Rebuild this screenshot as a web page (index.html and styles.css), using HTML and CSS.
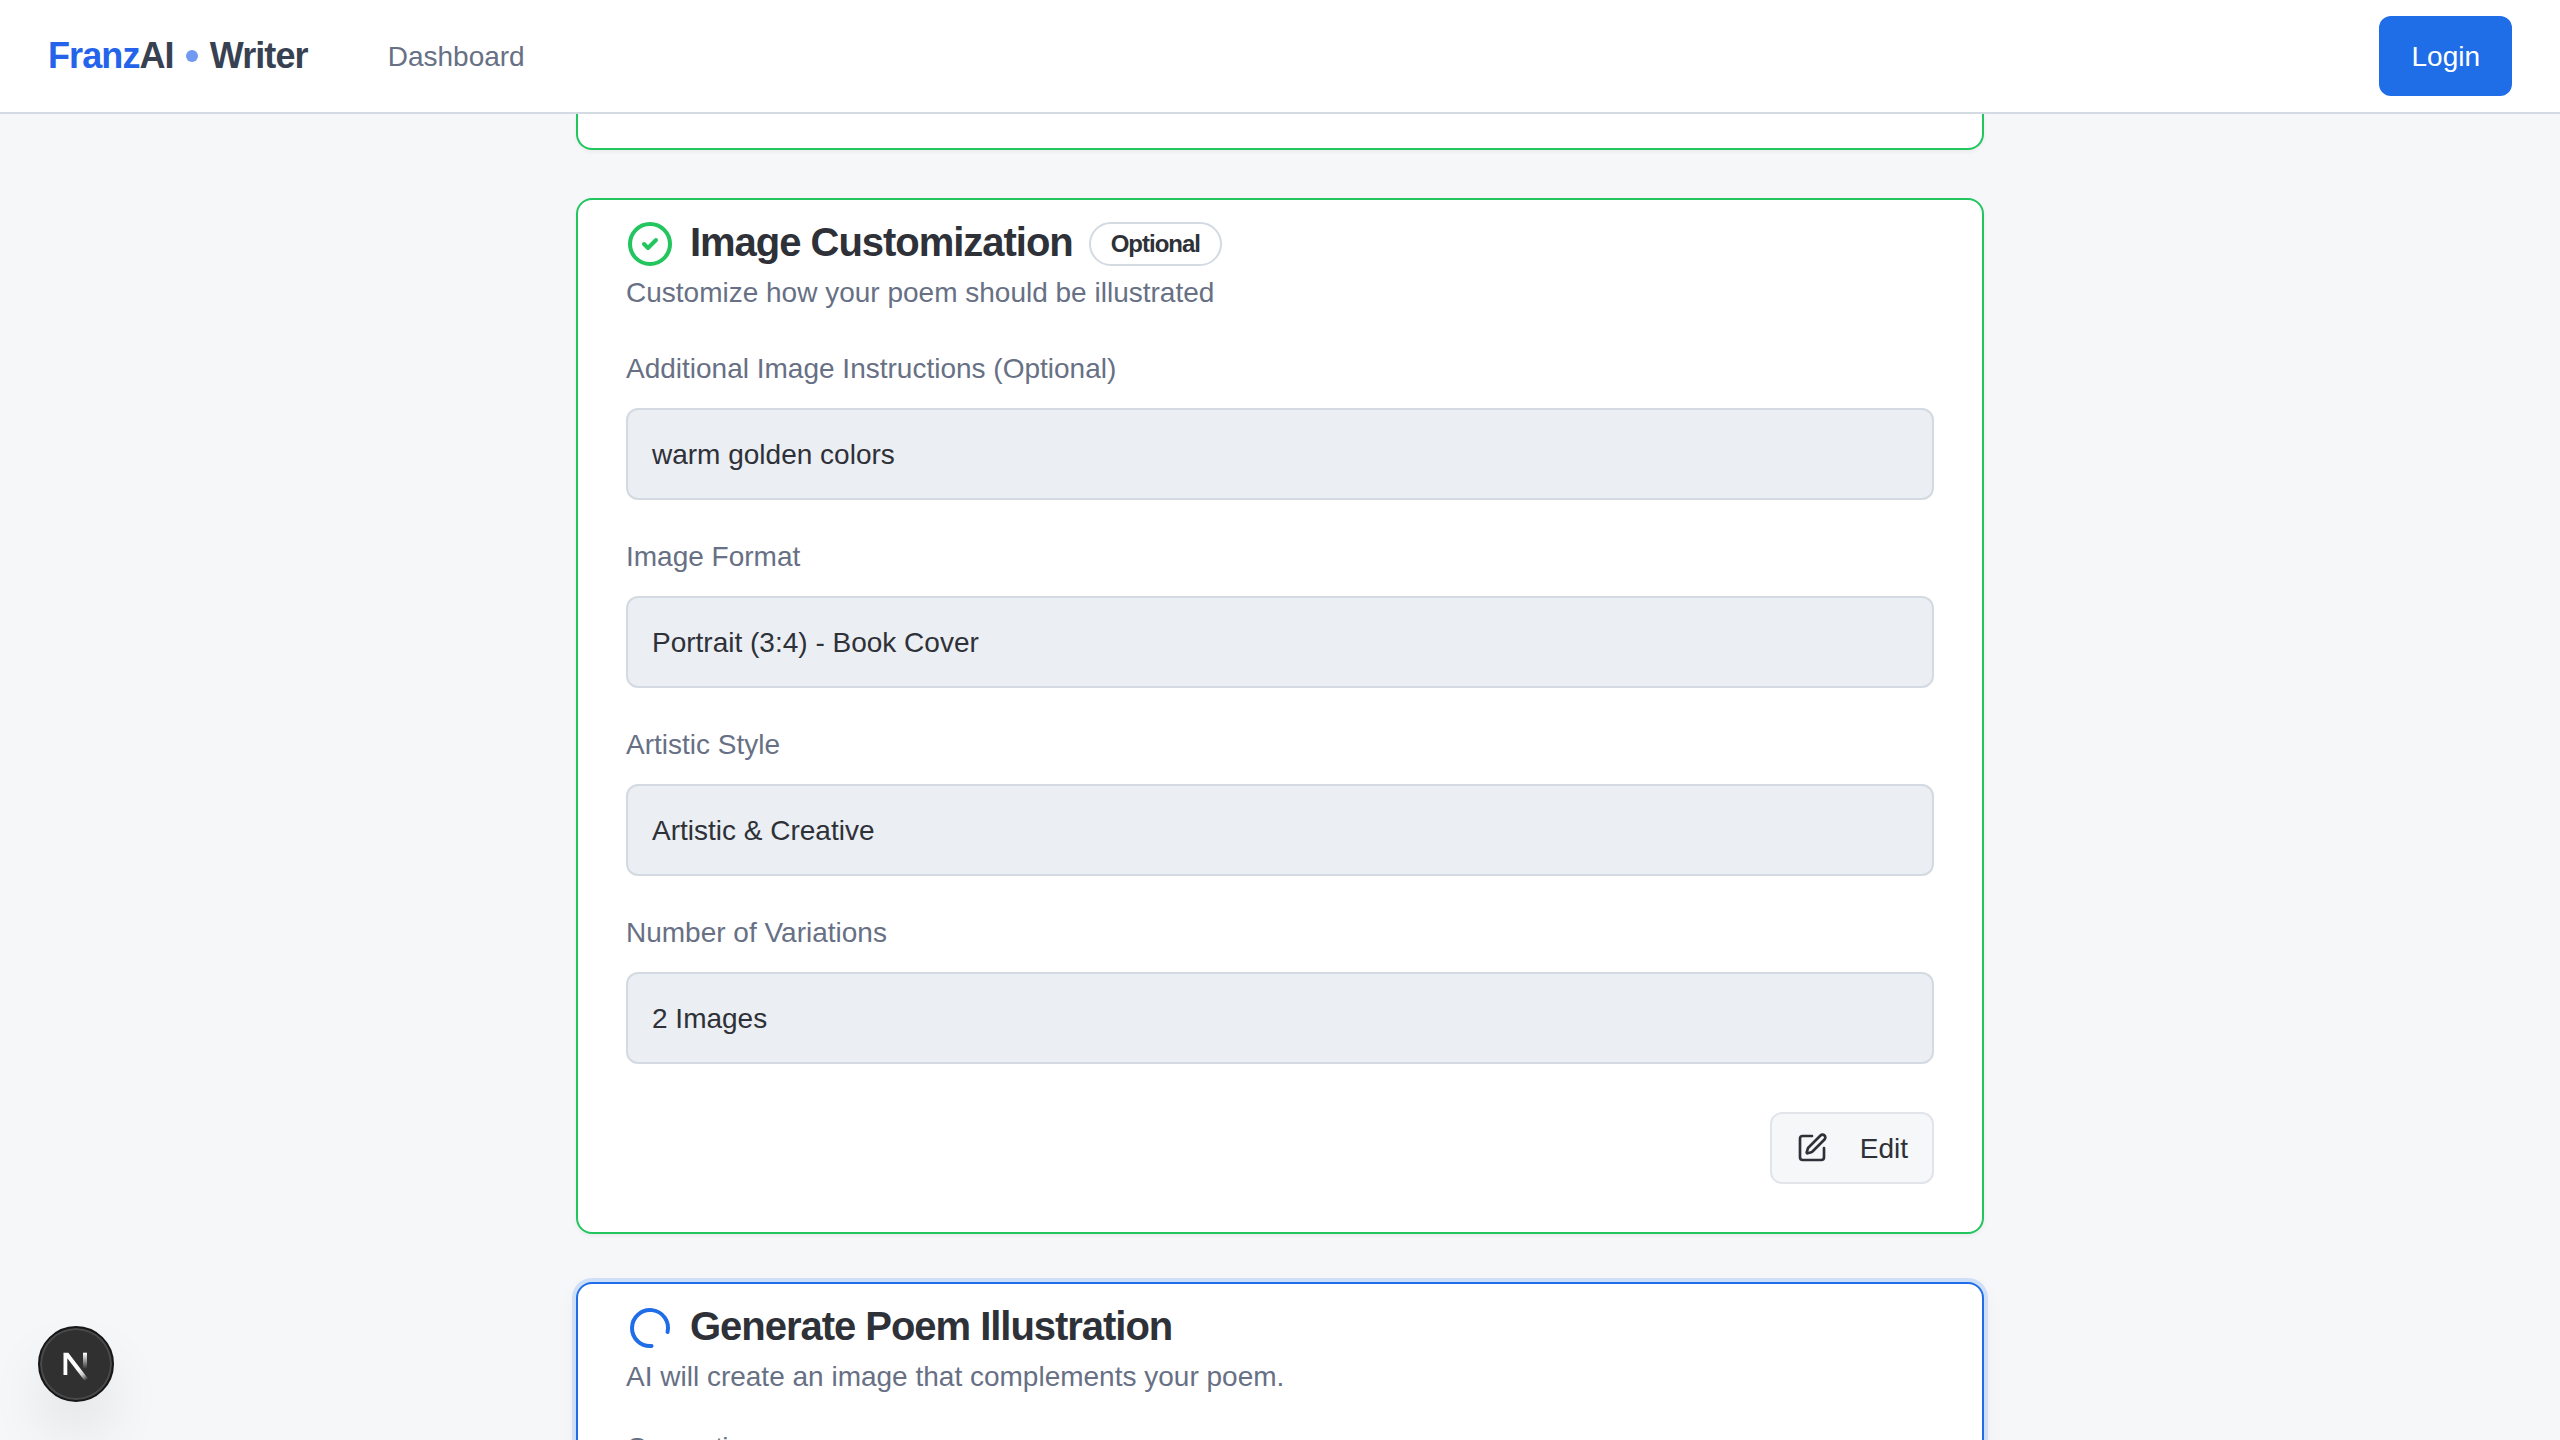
FILE: index.html
```html
<!DOCTYPE html>
<html lang="en">
<head>
<meta charset="utf-8">
<title>FranzAI Writer</title>
<link rel="stylesheet" href="styles.css">
</head>
<body>
<header class="topbar">
  <a class="logo"><span><span class="logo-accent">Franz</span>AI</span><i class="logo-dot"></i><span>Writer</span></a>
  <nav class="nav"><a>Dashboard</a></nav>
  <button class="btn btn-primary">Login</button>
</header>
<main class="stages">
  <section class="card card-done card-prev"></section>
  <section class="card card-done">
    <div class="card-head">
      <svg class="icon-lg icon-done" viewBox="0 0 24 24"><circle cx="12" cy="12" r="10"/><path d="m9 12 2 2 4-4"/></svg>
      <h2 class="title">Image Customization</h2>
      <span class="badge">Optional</span>
    </div>
    <p class="subtitle">Customize how your poem should be illustrated</p>
    <div class="fields">
      <div class="field"><label>Additional Image Instructions (Optional)</label><div class="value">warm golden colors</div></div>
      <div class="field"><label>Image Format</label><div class="value">Portrait (3:4) - Book Cover</div></div>
      <div class="field"><label>Artistic Style</label><div class="value">Artistic &amp; Creative</div></div>
      <div class="field"><label>Number of Variations</label><div class="value">2 Images</div></div>
    </div>
    <div class="actions">
      <button class="btn btn-outline">
        <svg class="icon-md" viewBox="0 0 24 24"><path d="M12 3H5a2 2 0 0 0-2 2v14a2 2 0 0 0 2 2h14a2 2 0 0 0 2-2v-7"/><path d="M18.375 2.625a1 1 0 0 1 3 3l-9.013 9.014a2 2 0 0 1-.853.505l-2.873.84a.5.5 0 0 1-.62-.62l.84-2.873a2 2 0 0 1 .506-.852z"/></svg>
        <span>Edit</span>
      </button>
    </div>
  </section>
  <section class="card card-active">
    <div class="card-head">
      <svg class="icon-lg icon-spin" viewBox="0 0 24 24"><path d="M21 12a9 9 0 1 1-6.219-8.56"/></svg>
      <h2 class="title">Generate Poem Illustration</h2>
    </div>
    <p class="subtitle">AI will create an image that complements your poem.</p>
    <p class="status">Generating...</p>
  </section>
</main>
<div class="dev-badge">
  <svg viewBox="0 0 72 72">
    <defs>
      <linearGradient id="diag" x1="38" y1="41" x2="47" y2="52" gradientUnits="userSpaceOnUse"><stop stop-color="#fff"/><stop offset="0.5" stop-color="#fff" stop-opacity="0.75"/><stop offset="1" stop-color="#fff" stop-opacity="0"/></linearGradient>
      <linearGradient id="stem" x1="0" y1="25" x2="0" y2="41" gradientUnits="userSpaceOnUse"><stop stop-color="#fff"/><stop offset="1" stop-color="#fff" stop-opacity="0"/></linearGradient>
    </defs>
    <path d="M23.5 47V24.7h4.8L48 50.5l-3.4 2.2L27.3 30.2V47z" fill="url(#diag)"/>
    <path d="M43 24.7h4v16h-4z" fill="url(#stem)"/>
  </svg>
</div>
</body>
</html>
```
FILE: styles.css
```css
* { box-sizing: border-box; }
html, body { margin: 0; height: 100%; }
body {
  overflow: hidden;
  display: flex;
  flex-direction: column;
  background: #f5f7f9;
  color: #2e3138;
  font: 28px/42px "Liberation Sans", Arial, sans-serif;
}
h2, p { margin: 0; }
svg { fill: none; stroke: currentColor; stroke-width: 2; stroke-linecap: round; stroke-linejoin: round; flex: none; }

.topbar {
  flex: none;
  height: 114px;
  padding: 0 48px;
  display: flex;
  align-items: center;
  background: #fff;
  border-bottom: 2px solid #d3dae1;
  position: relative;
  z-index: 2;
}
.logo { display: flex; align-items: center; gap: 12px; font-size: 36px; line-height: 40px; font-weight: 700; letter-spacing: -0.025em; color: #374151; }
.logo-accent { color: #2563eb; }
.logo-dot { width: 12px; height: 12px; border-radius: 50%; background: #7299f2; }
.nav { margin-left: 80px; padding-top: 2px; color: #677084; }

.btn { font: inherit; display: flex; align-items: center; border-radius: 12px; }
.btn-primary { margin-left: auto; height: 80px; padding: 2px 32px 0; border: 0; background: #206de8; color: #fff; }
.btn-outline { height: 72px; gap: 32px; padding: 0 24px; border: 2px solid #e1e5e9; background: #f5f7f9; color: #2e3138; }
.btn-outline span { padding-top: 2px; }

.stages { width: 1408px; margin: 0 auto; display: flex; flex-direction: column; gap: 48px; }
.card { flex: none; background: #fff; border: 2px solid; border-radius: 16px; padding: 20px 48px 48px; box-shadow: 0 2px 4px rgba(0, 0, 0, 0.05); }
.card-done { border-color: #22c55e; }
.card-prev { height: 36px; padding: 0; border-top: 0; border-radius: 0 0 16px 16px; }
.card-active { border-color: #206de8; box-shadow: 0 0 0 4px #d0dff8, 0 8px 24px rgba(0, 0, 0, 0.05); }
.card-head { display: flex; height: 48px; gap: 16px; }
.icon-lg { width: 48px; height: 48px; }
.icon-md { width: 32px; height: 32px; }
.icon-done { color: #22c55e; }
.icon-spin { color: #206de8; transform: rotate(85deg); }
.title { font-size: 40px; line-height: 44px; font-weight: 700; letter-spacing: -1.03px; }
.badge { height: 44px; margin-top: 2px; padding: 0 20px; border: 2px solid #d3dae1; border-radius: 22px; font-size: 24px; line-height: 40px; font-weight: 700; letter-spacing: -1px; }
.subtitle { margin-top: 4px; color: #677084; }
.fields { margin-top: 34px; display: flex; flex-direction: column; gap: 36px; }
.field { display: flex; flex-direction: column; gap: 18px; }
.field label { color: #677084; }
.value { padding: 24px 24px 22px; border: 2px solid #d3dae1; border-radius: 12px; background: #ebeef3; }
.actions { margin-top: 48px; display: flex; justify-content: flex-end; }
.status { margin-top: 29px; color: #677084; letter-spacing: -0.7px; }

.dev-badge {
  position: fixed;
  left: 38px;
  bottom: 38px;
  width: 76px;
  height: 76px;
  border-radius: 50%;
  background: #303030;
  border: 2px solid #171717;
  box-shadow: inset 0 0 0 2px #4a4a4a, 0 32px 64px -16px rgba(0, 0, 0, 0.24);
}
.dev-badge svg { display: block; width: 72px; height: 72px; stroke: none; }
```
